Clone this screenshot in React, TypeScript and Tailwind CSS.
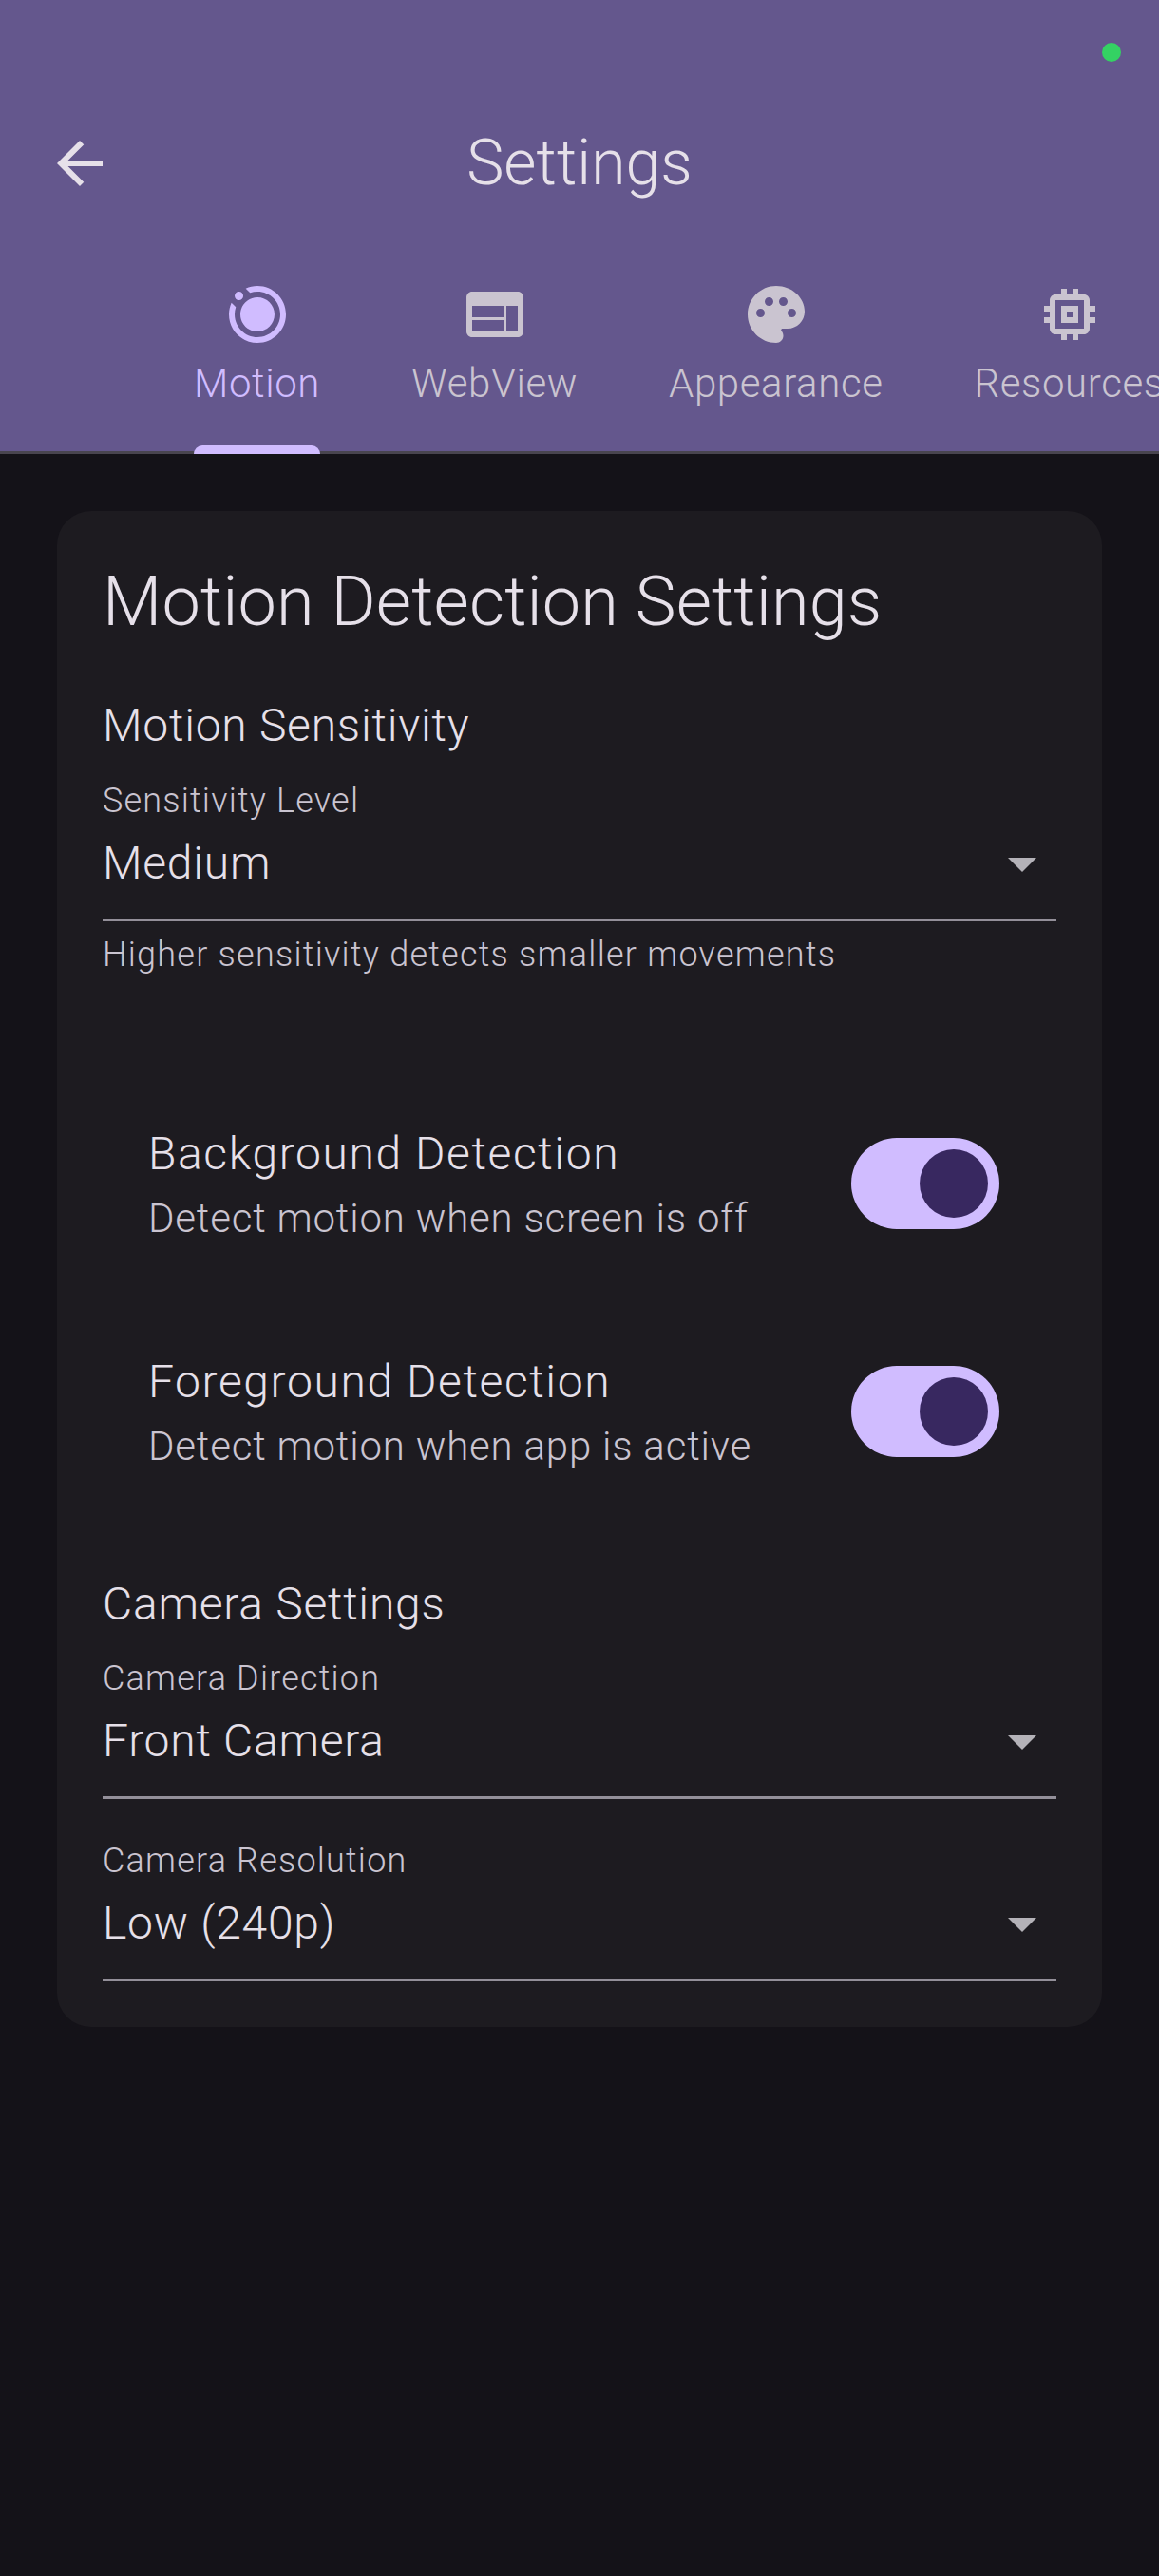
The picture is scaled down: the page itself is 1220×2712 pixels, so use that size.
type TabItem = {
	label: string
	path: string
	active?: boolean
}

const tabs: TabItem[] = [
	{
		label: "Motion",
		active: true,
		path: "M2.88 7.88l1.54 1.54C4.15 10.23 4 11.1 4 12c0 4.41 3.59 8 8 8s8-3.59 8-8-3.59-8-8-8c-.9 0-1.77.15-2.58.42L7.89 2.89C9.15 2.32 10.54 2 12 2c5.52 0 10 4.48 10 10s-4.48 10-10 10S2 17.52 2 12c0-1.47.32-2.86.88-4.12zM7 5.5C7 6.33 6.33 7 5.5 7S4 6.33 4 5.5 4.67 4 5.5 4 7 4.67 7 5.5zM12 6c3.31 0 6 2.69 6 6s-2.69 6-6 6-6-2.69-6-6 2.69-6 6-6z",
	},
	{
		label: "WebView",
		path: "M20 4H4c-1.1 0-1.99.9-1.99 2L2 18c0 1.1.9 2 2 2h16c1.1 0 2-.9 2-2V6c0-1.1-.9-2-2-2zm-5 14H4v-4h11v4zm0-5H4V9h11v4zm5 5h-4V9h4v9z",
	},
	{
		label: "Appearance",
		path: "M12 2C6.49 2 2 6.49 2 12s4.49 10 10 10c1.38 0 2.5-1.12 2.5-2.5 0-.61-.23-1.2-.64-1.67-.08-.1-.13-.21-.13-.33 0-.28.22-.5.5-.5H16c3.31 0 6-2.69 6-6 0-4.96-4.49-9-10-9zm5.5 11c-.83 0-1.5-.67-1.5-1.5s.67-1.5 1.5-1.5 1.5.67 1.5 1.5-.67 1.5-1.5 1.5zm-3-4c-.83 0-1.5-.67-1.5-1.5S13.67 6 14.5 6s1.5.67 1.5 1.5S15.33 9 14.5 9zM5 11.5c0-.83.67-1.5 1.5-1.5s1.5.67 1.5 1.5S7.33 13 6.5 13 5 12.33 5 11.5zm6-4c0 .83-.67 1.5-1.5 1.5S8 8.33 8 7.5 8.67 6 9.5 6s1.5.67 1.5 1.5z",
	},
	{
		label: "Resources",
		path: "M15 9H9v6h6V9zm-2 4h-2v-2h2v2zm8-2V9h-2V7c0-1.1-.9-2-2-2h-2V3h-2v2h-2V3H9v2H7c-1.1 0-2 .9-2 2v2H3v2h2v2H3v2h2v2c0 1.1.9 2 2 2h2v2h2v-2h2v2h2v-2h2c1.1 0 2-.9 2-2v-2h2v-2h-2v-2h2zm-4 6H7V7h10v10z",
	},
]

function Icon({ path, className }: { path: string; className?: string }) {
	return (
		<svg viewBox="0 0 24 24" fill="currentColor" className={className}>
			<path d={path} />
		</svg>
	)
}

function Header() {
	return (
		<header className="relative bg-[#64578d] pt-[88px]">
			<div className="absolute top-[45px] right-[40px] w-[20px] h-[20px] rounded-full bg-[#34d263]" />
			<div className="flex items-center h-[168px] px-[48px]">
				<Icon
					path="M20 11H7.83l5.59-5.59L12 4l-8 8 8 8 1.41-1.41L7.83 13H20v-2z"
					className="w-[72px] h-[72px] text-[#e6e0e9]"
				/>
				<h1 className="flex-1 text-center text-[66px] leading-[84px] font-light tracking-[0.1px] text-[#e6e0e9]">
					Settings
				</h1>
				<div className="w-[72px]" />
			</div>
			<div className="flex h-[222px] pl-[156px] border-b-[3px] border-[#49454f] overflow-x-clip">
				{tabs.map((tab) => (
					<div
						key={tab.label}
						className={`relative flex flex-col items-center shrink-0 px-[48px] pt-[39px] ${
							tab.active ? "text-[#d0bcff]" : "text-[#cac4d0]"
						}`}
					>
						<Icon path={tab.path} className="w-[72px] h-[72px]" />
						<span className="mt-[7px] text-[42px] leading-[60px] font-light tracking-[0.6px] whitespace-nowrap">
							{tab.label}
						</span>
						{tab.active && (
							<div className="absolute left-[48px] right-[48px] bottom-[-3px] h-[9px] rounded-t-[9px] bg-[#d0bcff]" />
						)}
					</div>
				))}
			</div>
		</header>
	)
}

function SelectField({
	label,
	value,
	className,
}: {
	label: string
	value: string
	className?: string
}) {
	return (
		<div className={className}>
			<div className="text-[36px] leading-[48px] font-light tracking-[1.2px] text-[#cac4d0]">
				{label}
			</div>
			<div className="flex items-center justify-between mt-[6px] pb-[22px] pr-[21px] border-b-[3px] border-[#938f99]">
				<span className="text-[48px] leading-[72px] font-light tracking-[0.75px] text-[#e6e0e9]">
					{value}
				</span>
				<div className="mt-[3px] w-0 h-0 border-x-[15px] border-x-transparent border-t-[15px] border-t-[#b4b2b8]" />
			</div>
		</div>
	)
}

function SwitchRow({ title, subtitle }: { title: string; subtitle: string }) {
	return (
		<div className="flex items-center justify-between h-[240px] pl-[48px] pr-[60px]">
			<div>
				<div className="text-[48px] leading-[72px] font-light tracking-[1.6px] text-[#e6e0e9]">
					{title}
				</div>
				<div className="mt-[2px] text-[42px] leading-[60px] font-light tracking-[0.8px] text-[#cac4d0]">
					{subtitle}
				</div>
			</div>
			<div className="flex items-center justify-end w-[156px] h-[96px] pr-[12px] rounded-full bg-[#d0bcff]">
				<div className="w-[72px] h-[72px] rounded-full bg-[#382860]" />
			</div>
		</div>
	)
}

export default function App() {
	return (
		<div className="min-h-[2712px] bg-[#141218] font-[Roboto,sans-serif] overflow-hidden">
			<Header />
			<main className="px-[60px] pt-[60px]">
				<section className="rounded-[36px] bg-[#1d1b20] p-[48px]">
					<h2 className="text-[72px] leading-[96px] font-light tracking-[0.15px] text-[#e6e0e9]">
						Motion Detection Settings
					</h2>
					<h3 className="mt-[46px] text-[48px] leading-[72px] font-light tracking-[0.75px] text-[#e6e0e9]">
						Motion Sensitivity
					</h3>
					<SelectField
						className="mt-[19px]"
						label="Sensitivity Level"
						value="Medium"
					/>
					<p className="mt-[11px] text-[36px] leading-[48px] font-light tracking-[1.25px] text-[#cac4d0]">
						Higher sensitivity detects smaller movements
					</p>
					<div className="mt-[97px]">
						<SwitchRow
							title="Background Detection"
							subtitle="Detect motion when screen is off"
						/>
						<SwitchRow
							title="Foreground Detection"
							subtitle="Detect motion when app is active"
						/>
					</div>
					<h3 className="mt-[47px] text-[48px] leading-[72px] font-light tracking-[0.75px] text-[#e6e0e9]">
						Camera Settings
					</h3>
					<SelectField
						className="mt-[18px]"
						label="Camera Direction"
						value="Front Camera"
					/>
					<SelectField
						className="mt-[41px]"
						label="Camera Resolution"
						value="Low (240p)"
					/>
				</section>
			</main>
		</div>
	)
}
